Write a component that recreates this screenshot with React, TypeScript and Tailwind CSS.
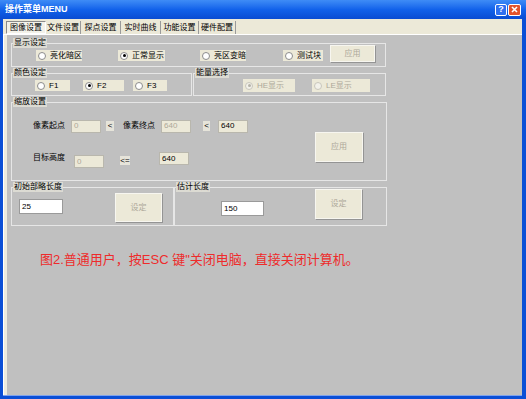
import type { ReactNode } from 'react';

const tabs = [
  { name: '文件设置', w: 'w-[35px]' },
  { name: '探点设置', w: 'w-[40px]' },
  { name: '实时曲线', w: 'w-[40px]' },
  { name: '功能设置', w: 'w-[38px]' },
  { name: '硬件配置', w: 'w-[37px]' },
];

function Group({ title, className, children }: { title: string; className?: string; children?: ReactNode }) {
  return (
    <fieldset className={`border border-[#e6e6e6] ${className ?? ''}`}>
      <legend className="ml-[1px] bg-[#dcdbd3] px-[1px] text-[8px] leading-[10px] text-black">{title}</legend>
      {children}
    </fieldset>
  );
}

function Radio({ label, checked, disabled, className }: { label: string; checked?: boolean; disabled?: boolean; className?: string }) {
  return (
    <div className={`flex h-[11px] items-center gap-[4px] bg-[#ece9d8] pl-[2px] ${className ?? ''}`}>
      <span
        className={`flex h-[8px] w-[8px] shrink-0 items-center justify-center rounded-full border ${
          disabled ? 'border-[#c8c6bc] bg-[#f2f1ea]' : 'border-[#8c8c8c] bg-white'
        }`}
      >
        {checked && <span className={`h-[3px] w-[3px] rounded-full ${disabled ? 'bg-[#b4b2a8]' : 'bg-black'}`} />}
      </span>
      <span className={`whitespace-nowrap text-[8px] leading-none ${disabled ? 'text-[#aca899]' : 'text-black'}`}>{label}</span>
    </div>
  );
}

function Field({ value, kind, className }: { value: string; kind: 'disabled' | 'beige' | 'white'; className?: string }) {
  const look =
    kind === 'white'
      ? 'border-[#9a9a9a] bg-white text-black'
      : kind === 'beige'
        ? 'border-[#b9b7ad] bg-[#ece9d8] text-black'
        : 'border-[#b9b7ad] bg-[#ece9d8] text-[#aca899]';
  return (
    <div className={`flex h-[13px] items-center border pl-[2px] text-[8px] leading-none ${look} ${className ?? ''}`}>{value}</div>
  );
}

function Btn({ label, className }: { label: string; className?: string }) {
  return (
    <div
      className={`flex items-center justify-center border border-[#f7f6f0] bg-[#ece9d8] text-[8px] text-[#aca899] shadow-[1px_1px_0_#949494] ${className ?? ''}`}
    >
      {label}
    </div>
  );
}

export default function App() {
  return (
    <div className="flex h-[399px] w-[526px] flex-col overflow-hidden bg-[#0b4fd6] font-['Liberation_Sans','Noto_Sans_CJK_SC',sans-serif]">
      {/* title bar */}
      <div className="flex h-[19px] shrink-0 items-center bg-linear-to-b from-[#3f8cf6] via-[#1262ea] to-[#0a4cd2] pl-[5px] pr-[5px]">
        <span className="text-[9px] font-bold leading-none text-white">操作菜单MENU</span>
        <div className="ml-auto flex gap-[1px]">
          <div className="flex h-[12px] w-[12px] items-center justify-center rounded-[2px] border border-white bg-[#2e6ff0] text-[9px] font-bold leading-none text-white">
            ?
          </div>
          <div className="flex h-[12px] w-[13px] items-center justify-center rounded-[2px] border border-white bg-[#e2532c]">
            <svg width="7" height="7" viewBox="0 0 7 7">
              <path d="M1 1 L6 6 M6 1 L1 6" stroke="white" strokeWidth="1.6" />
            </svg>
          </div>
        </div>
      </div>

      <div className="flex min-h-0 flex-1">
        <div className="w-[3px] shrink-0 bg-[#0b4fd6]" />
        <div className="flex min-w-0 flex-1 flex-col">
          {/* tab strip */}
          <div className="flex h-[16px] shrink-0 items-end border-b border-white bg-[#ece9d8] pl-[3px] text-[8px] leading-none">
            <div className="flex h-[13px] w-[40px] items-center justify-center border border-t-[#8a8a8a] border-l-[#8a8a8a] border-b-white border-r-white bg-[#f3f2ea]">
              图像设置
            </div>
            {tabs.map((t) => (
              <div key={t.name} className={`flex h-[13px] items-center justify-center border-r border-r-[#9a9a9a] ${t.w}`}>
                {t.name}
              </div>
            ))}
          </div>

          {/* tab page */}
          <div className="flex min-h-0 flex-1 bg-[#c0c0c0]">
            <div className="w-[4px] shrink-0 border-l border-white bg-[#eeecdf]" />
            <div className="flex flex-1 flex-col pl-[4px] pt-[3px]">
              <Group title="显示设定" className="h-[29px] w-[375px]">
                <div className="flex items-start pl-[24px]">
                  <Radio label="亮化暗区" className="mt-[2px] w-[46px]" />
                  <Radio label="正常显示" checked className="ml-[36px] mt-[2px] w-[47px]" />
                  <Radio label="亮区变暗" className="ml-[35px] mt-[2px] w-[46px]" />
                  <Radio label="测试块" className="ml-[37px] mt-[2px] w-[40px]" />
                  <Btn label="应用" className="-mt-[3px] ml-[7px] h-[17px] w-[45px]" />
                </div>
              </Group>

              <div className="mt-[1px] flex">
                <Group title="颜色设定" className="h-[28px] w-[181px]">
                  <div className="flex pl-[23px] pt-[2px]">
                    <Radio label="F1" className="w-[35px]" />
                    <Radio label="F2" checked className="ml-[13px] w-[41px]" />
                    <Radio label="F3" className="ml-[9px] w-[34px]" />
                  </div>
                </Group>
                <Group title="能量选择" className="ml-[1px] h-[28px] w-[193px]">
                  <div className="flex pl-[49px] pt-[1px]">
                    <Radio label="HE显示" checked disabled className="h-[13px] w-[52px]" />
                    <Radio label="LE显示" disabled className="ml-[17px] h-[13px] w-[58px]" />
                  </div>
                </Group>
              </div>

              <Group title="缩放设置" className="mt-[1px] h-[84px] w-[376px]">
                <div className="flex items-start">
                  <div className="flex flex-col pl-[21px] text-[8px] leading-none">
                    <div className="mt-[12px] flex h-[14px] items-center">
                      <span className="w-[33px] whitespace-nowrap">像素起点</span>
                      <Field value="0" kind="disabled" className="ml-[5px] w-[30px]" />
                      <span className="ml-[5px] flex h-[10px] w-[8px] items-center justify-center bg-[#e6e4da]">&lt;</span>
                      <span className="ml-[9px] w-[33px] whitespace-nowrap">像素终点</span>
                      <Field value="640" kind="disabled" className="ml-[5px] w-[30px]" />
                      <span className="ml-[12px] flex h-[10px] w-[7px] items-center justify-center bg-[#e6e4da]">&lt;</span>
                      <Field value="640" kind="beige" className="ml-[8px] w-[30px]" />
                    </div>
                    <div className="mt-[19px] flex h-[15px] items-start">
                      <span className="mt-[2px] w-[33px] whitespace-nowrap">目标高度</span>
                      <Field value="0" kind="disabled" className="ml-[8px] mt-[3px] w-[30px]" />
                      <span className="ml-[16px] mt-[4px] flex h-[9px] w-[10px] items-center justify-center bg-[#e6e4da]">&lt;=</span>
                      <Field value="640" kind="beige" className="ml-[29px] w-[30px]" />
                    </div>
                  </div>
                  <Btn label="应用" className="ml-[67px] mt-[25px] h-[30px] w-[48px]" />
                </div>
              </Group>

              <div className="mt-[1px] flex">
                <Group title="初始部略长度" className="h-[44px] w-[163px]">
                  <div className="flex items-start pl-[7px]">
                    <Field value="25" kind="white" className="mt-[7px] h-[15px] w-[44px]" />
                    <Btn label="设定" className="ml-[52px] mt-[1px] h-[29px] w-[47px]" />
                  </div>
                </Group>
                <Group title="估计长度" className="h-[44px] w-[213px]">
                  <div className="flex items-start pl-[46px]">
                    <Field value="150" kind="white" className="mt-[9px] h-[15px] w-[43px]" />
                    <Btn label="设定" className="-mt-[3px] ml-[51px] h-[30px] w-[47px]" />
                  </div>
                </Group>
              </div>

              <p className="ml-[29px] mt-[27px] text-[13px] leading-[14px] text-[#ee2b2b]">
                图2.普通用户，按ESC 键"关闭电脑，直接关闭计算机。
              </p>
            </div>
          </div>
          <div className="h-[1px] shrink-0 bg-[#7da2ee]" />
        </div>
        <div className="w-[4px] shrink-0 bg-[#0b4fd6]" />
      </div>
      <div className="h-[3px] shrink-0 bg-[#0b4fd6]" />
    </div>
  );
}
